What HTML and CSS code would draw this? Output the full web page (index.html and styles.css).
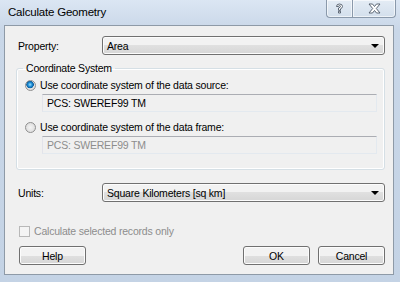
FILE: index.html
```html
<!DOCTYPE html>
<html lang="en">
<head>
  <meta charset="UTF-8" />
  <title>Calculate Geometry</title>
  <link rel="stylesheet" href="styles.css">
</head>
<body>

  <div class="window">
    <div class="titlebar">
      <span class="title">Calculate Geometry</span>
      <div class="caption-buttons">
        <div class="cap-btn cap-help">
          <svg width="9" height="11" viewBox="0 0 9 11">
            <path d="M1.5 3.5 Q1.5 1 4.5 1 Q7.5 1 7.5 3.5 Q7.5 5 5.5 5.8 L5.5 7.3 L3.5 7.3 L3.5 5 Q5.5 4.4 5.5 3.5 Q5.5 2.6 4.5 2.6 Q3.5 2.6 3.5 3.5 Z M3.5 8.2 L5.5 8.2 L5.5 10 L3.5 10 Z" fill="#fff" stroke="#4d5866" stroke-width="0.9"/>
          </svg>
        </div>
        <div class="cap-btn cap-close">
          <svg width="13" height="11" viewBox="0 0 13 11">
            <path d="M1 1 L4.5 1 L6.5 3.5 L8.5 1 L12 1 L8.3 5.5 L12 10 L8.5 10 L6.5 7.5 L4.5 10 L1 10 L4.7 5.5 Z" fill="#fff" stroke="#4d5866" stroke-width="0.9"/>
          </svg>
        </div>
      </div>
    </div>

    <div class="client">
      <div class="row row-property">
        <label class="row-label">Property:</label>
        <div class="combo">
          <span>Area</span>
          <span class="arrow"></span>
        </div>
      </div>

      <fieldset class="group">
        <legend>Coordinate System</legend>

        <div class="option">
          <span class="radio checked"></span>
          <span>Use coordinate system of the data source:</span>
        </div>
        <div class="readonly">PCS: SWEREF99 TM</div>

        <div class="option option-second">
          <span class="radio"></span>
          <span>Use coordinate system of the data frame:</span>
        </div>
        <div class="readonly disabled">PCS: SWEREF99 TM</div>
      </fieldset>

      <div class="row row-units">
        <label class="row-label">Units:</label>
        <div class="combo">
          <span>Square Kilometers [sq km]</span>
          <span class="arrow"></span>
        </div>
      </div>

      <div class="check-row">
        <span class="checkbox"></span>
        <span>Calculate selected records only</span>
      </div>

      <div class="buttons">
        <button class="btn">Help</button>
        <div class="buttons-right">
          <button class="btn">OK</button>
          <button class="btn">Cancel</button>
        </div>
      </div>
    </div>
  </div>

</body>
</html>
```
FILE: styles.css
```css
html, body {
  margin: 0;
  width: 400px;
  height: 282px;
  overflow: hidden;
}

body {
  font-family: 'Liberation Sans', Arial, sans-serif;
  font-size: 10.5px;
  letter-spacing: -0.2px;
  color: #000;
}

.window {
  width: 400px;
  height: 282px;
  box-sizing: border-box;
  background: linear-gradient(#dbe6f3, #c9d7e8 30px, #c4d3e5);
  padding: 0 6px 7px 4px;
  display: flex;
  flex-direction: column;
}

.titlebar {
  height: 25px;
  display: flex;
  justify-content: space-between;
  align-items: flex-start;
}

.title {
  font-size: 11.5px;
  margin: 6px 0 0 4px;
}

.caption-buttons {
  display: flex;
  margin-right: -2px;
}

.cap-btn {
  height: 18px;
  box-sizing: border-box;
  border: 1px solid #8a99ab;
  border-top: none;
  box-shadow: inset 0 0 0 1px rgba(255,255,255,0.6);
  background: linear-gradient(#e4ecf5, #d3dfec);
  display: flex;
  align-items: center;
  justify-content: center;
}

.cap-help {
  width: 26px;
  border-right: none;
  border-bottom-left-radius: 4px;
}

.cap-close {
  width: 44px;
  border-bottom-right-radius: 4px;
}

.client {
  flex: 1;
  background: #f0f0f0;
  border: 1px solid #8e9aa7;
  display: flex;
  flex-direction: column;
}

.row {
  display: flex;
  align-items: center;
  padding-left: 13px;
}

.row-property {
  margin-top: 10px;
}

.row-label {
  width: 84px;
}

.combo {
  width: 283px;
  height: 19px;
  box-sizing: border-box;
  border: 1px solid #707070;
  border-radius: 3px;
  background: linear-gradient(#f2f2f2 50%, #e0e0e0 50%, #d6d6d6);
  box-shadow: inset 0 0 0 1px #fcfcfc;
  display: flex;
  align-items: center;
  justify-content: space-between;
  padding: 0 5px 0 4px;
}

.arrow {
  width: 0;
  height: 0;
  border-left: 4px solid transparent;
  border-right: 4px solid transparent;
  border-top: 4px solid #000;
}

.group {
  margin: 7px 0 0 11px;
  width: 369px;
  height: 108px;
  box-sizing: border-box;
  border: 1px solid #d5dfe5;
  border-radius: 3px;
  box-shadow: inset 0 0 0 1px #fff;
  padding: 0;
}

.group legend {
  margin-left: 6px;
  padding: 0 3px;
  line-height: 12px;
}

.option {
  display: flex;
  align-items: center;
  gap: 4px;
  margin: 5px 0 0 8px;
}

.option-second {
  margin-top: 9px;
}

.radio {
  width: 11px;
  height: 11px;
  box-sizing: border-box;
  border-radius: 50%;
  border: 1px solid #8f8f8f;
  background: radial-gradient(circle, #f4f4f4, #d6d6d6);
}

.radio.checked {
  background: radial-gradient(circle at 45% 40%, #9fe3ff 0, #1f8fd8 2px, #0b5c9a 3.5px, #e8e8e8 4px, #cfcfcf);
}

.readonly {
  margin: 3px 0 0 25px;
  width: 335px;
  height: 18px;
  box-sizing: border-box;
  border: 1px solid #abadb3;
  border-right-color: #e3e9ef;
  border-bottom-color: #e3e9ef;
  border-left-color: #e2e3ea;
  padding: 2px 0 0 4px;
  background: #f0f0f0;
}

.readonly.disabled {
  color: #8d8d8d;
}

.row-units {
  margin-top: 13px;
}

.check-row {
  display: flex;
  align-items: center;
  gap: 4px;
  margin: 23px 0 0 14px;
  color: #8d8d8d;
}

.checkbox {
  width: 11px;
  height: 11px;
  box-sizing: border-box;
  border: 1px solid #b8b8b8;
  background: #f4f4f4;
}

.buttons {
  display: flex;
  justify-content: space-between;
  margin: 9px 0 0 14px;
  width: 366px;
}

.buttons-right {
  display: flex;
  gap: 8px;
}

.btn {
  width: 67px;
  height: 19px;
  box-sizing: border-box;
  border: 1px solid #707070;
  border-radius: 3px;
  background: linear-gradient(#f2f2f2 50%, #e0e0e0 50%, #d6d6d6);
  box-shadow: inset 0 0 0 1px #fcfcfc;
  font-family: inherit;
  font-size: 10.5px;
  letter-spacing: -0.2px;
  color: #000;
  padding: 0;
}
```
